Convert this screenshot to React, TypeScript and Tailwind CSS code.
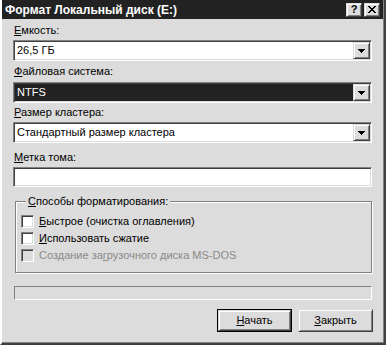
import React from 'react';

const sunken =
  'border border-t-[#808080] border-l-[#808080] border-b-white border-r-white shadow-[inset_1px_1px_0_#404040,inset_-1px_-1px_0_#dcdcdc]';
const raised =
  'border border-t-[#dcdcdc] border-l-[#dcdcdc] border-b-[#404040] border-r-[#404040] shadow-[inset_1px_1px_0_#fff,inset_-1px_-1px_0_#808080]';

function Arrow() {
  return (
    <svg width="7" height="4" viewBox="0 0 7 4" shapeRendering="crispEdges">
      <path d="M0 0h7v1H0zM1 1h5v1H1zM2 2h3v1H2zM3 3h1v1H3z" fill="#000" />
    </svg>
  );
}

function Combo({ value, active }: { value: string; active?: boolean }) {
  return (
    <div className={`w-[359px] h-[21px] flex ${sunken} ${active ? 'bg-[#222]' : 'bg-white'}`}>
      <div className={`flex-1 flex items-center pl-[3px] ${active ? 'text-white' : 'text-black'}`}>
        {value}
      </div>
      <div className={`w-[17px] h-[17px] mt-px mr-px bg-[#dcdcdc] flex items-center justify-center ${raised}`}>
        <Arrow />
      </div>
    </div>
  );
}

function Label({ first, rest, className }: { first: string; rest: string; className: string }) {
  return (
    <div className={`h-[13px] leading-[13px] pl-px ${className}`}>
      <span className="underline underline-offset-1">{first}</span>
      {rest}
    </div>
  );
}

function Check({ children, disabled }: { children: React.ReactNode; disabled?: boolean }) {
  return (
    <div className="flex items-center h-[17px]">
      <div className={`w-[13px] h-[13px] ${sunken} ${disabled ? 'bg-[#dcdcdc]' : 'bg-white'}`} />
      <div className={`ml-[5px] leading-[13px] ${disabled ? 'text-[#8a8a8a]' : 'text-black'}`}>{children}</div>
    </div>
  );
}

export default function App() {
  return (
    <div className="w-[386px] h-[345px] bg-[#dcdcdc] font-['Liberation_Sans',Arial,sans-serif] text-[11px] text-black border-l-2 border-l-white border-r-2 border-r-[#404040] border-b-2 border-b-[#404040] overflow-hidden">
      <div className="h-full border-r border-b border-[#808080] flex flex-col">
        <div className="h-[19px] bg-[#222] flex items-center pl-[3px] pr-[3px]">
          <div className="flex-1 text-white font-bold text-[12px] leading-none">Формат Локальный диск (E:)</div>
          <div className={`w-[16px] h-[14px] bg-[#dcdcdc] flex items-center justify-center font-bold text-[11px] leading-none ${raised}`}>?</div>
          <div className={`w-[16px] h-[14px] ml-[2px] bg-[#dcdcdc] flex items-center justify-center ${raised}`}>
            <svg width="8" height="7" viewBox="0 0 8 7" shapeRendering="crispEdges">
              <path d="M0 0h2v1H0zM6 0h2v1H6zM1 1h2v1H1zM5 1h2v1H5zM2 2h4v1H2zM3 3h2v1H3zM2 4h4v1H2zM1 5h2v1H1zM5 5h2v1H5zM0 6h2v1H0zM6 6h2v1H6z" fill="#000" />
            </svg>
          </div>
        </div>

        <div className="pl-[11px] flex flex-col">
          <Label first="Е" rest="мкость:" className="mt-[5px]" />
          <div className="mt-[3px]">
            <Combo value="26,5 ГБ" />
          </div>
          <Label first="Ф" rest="айловая система:" className="mt-[4px]" />
          <div className="mt-[4px]">
            <Combo value="NTFS" active />
          </div>
          <Label first="Р" rest="азмер кластера:" className="mt-[3px]" />
          <div className="mt-[3px]">
            <Combo value="Стандартный размер кластера" />
          </div>
          <Label first="М" rest="етка тома:" className="mt-[8px]" />
          <div className={`mt-[3px] w-[359px] h-[20px] bg-white ${sunken}`} />

          <fieldset className="mt-[8px] ml-[2px] w-[357px] h-[78px] border border-[#808080] shadow-[inset_1px_1px_0_#fff,1px_1px_0_#fff] pl-[5px] pt-[5px] m-0">
            <legend className="ml-[5px] px-[2px] leading-[13px] bg-[#dcdcdc]">
              <span className="underline underline-offset-1">С</span>пособы форматирования:
            </legend>
            <Check>
              <span className="underline underline-offset-1">Б</span>ыстрое (очистка оглавления)
            </Check>
            <Check>
              <span className="underline underline-offset-1">И</span>спользовать сжатие
            </Check>
            <Check disabled>
              Создание за<span className="underline underline-offset-1">г</span>рузочного диска MS-DOS
            </Check>
          </fieldset>

          <div className="mt-[13px] ml-px w-[358px] h-[14px] border border-t-[#808080] border-l-[#808080] border-b-white border-r-white" />

          <div className="mt-[9px] w-[360px] flex justify-end gap-[6px]">
            <div className="w-[75px] h-[23px] border border-black">
              <div className={`w-full h-full flex items-center justify-center ${raised}`}>
                <span className="underline underline-offset-1">Н</span>ачать
              </div>
            </div>
            <div className={`w-[75px] h-[23px] flex items-center justify-center ${raised}`}>
              <span className="underline underline-offset-1">З</span>акрыть
            </div>
          </div>
        </div>
      </div>
    </div>
  );
}
